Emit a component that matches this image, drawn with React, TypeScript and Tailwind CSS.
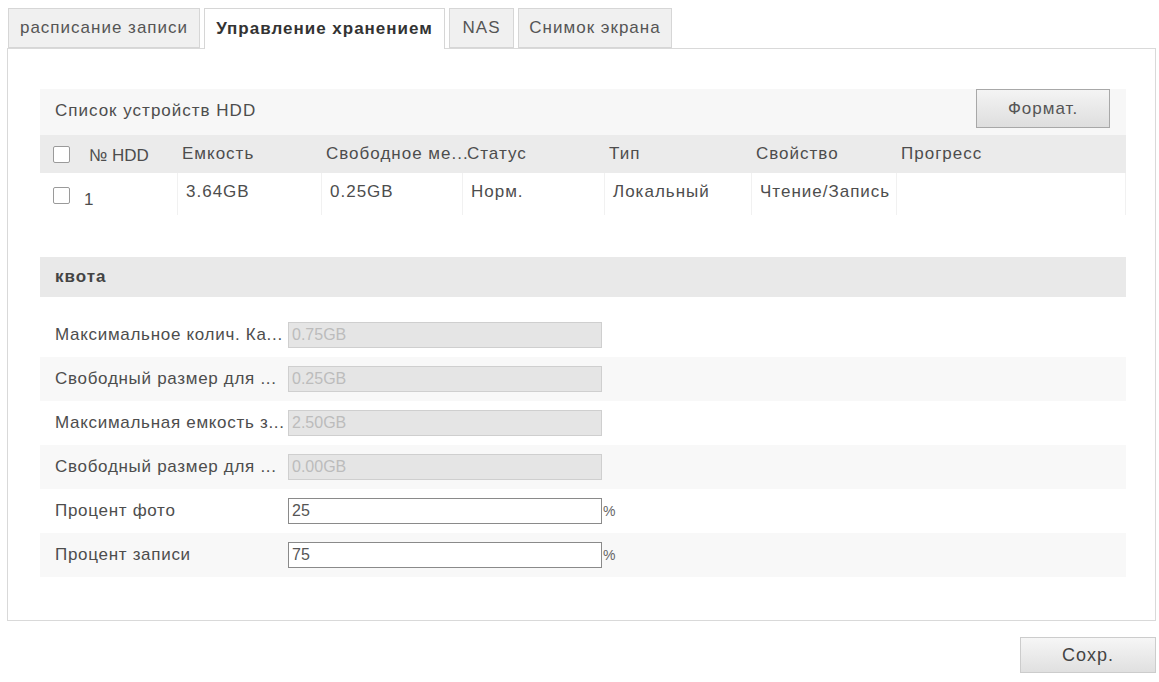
import React from "react";

const tabs = [
  { label: "расписание записи", w: "w-[192px]", active: false },
  { label: "Управление хранением", w: "w-[241px]", active: true },
  { label: "NAS", w: "w-[65px]", active: false },
  { label: "Снимок экрана", w: "w-[154px]", active: false },
];

const columns = [
  { title: "Емкость", value: "3.64GB", w: "w-[144px]" },
  { title: "Свободное ме...", value: "0.25GB", w: "w-[141px]" },
  { title: "Статус", value: "Норм.", w: "w-[142px]" },
  { title: "Тип", value: "Локальный", w: "w-[147px]" },
  { title: "Свойство", value: "Чтение/Запись", w: "w-[145px]" },
  { title: "Прогресс", value: "", w: "flex-1" },
];

const quotaRows = [
  { label: "Максимальное колич. Ка...", value: "0.75GB", disabled: true },
  { label: "Свободный размер для ...", value: "0.25GB", disabled: true },
  { label: "Максимальная емкость з...", value: "2.50GB", disabled: true },
  { label: "Свободный размер для ...", value: "0.00GB", disabled: true },
  { label: "Процент фото", value: "25", disabled: false },
  { label: "Процент записи", value: "75", disabled: false },
];

function Checkbox() {
  return (
    <span className="inline-block h-[17px] w-[17px] shrink-0 rounded-[2px] border border-[#9a9a9a] bg-white" />
  );
}

export default function App() {
  return (
    <div className="h-[682px] w-[1159px] bg-white font-['Liberation_Sans',Arial,sans-serif] text-[17px] tracking-[1px] text-[#4d4d4d]">
      {/* Tabs */}
      <div className="flex h-[48px] items-end gap-[4px] pl-[8px]">
        {tabs.map((t) => (
          <div
            key={t.label}
            className={
              t.active
                ? `relative z-10 -mb-px flex h-[41px] ${t.w} items-center justify-center whitespace-nowrap border border-b-0 border-[#d6d6d6] bg-white pb-[1px] font-bold text-[#333]`
                : `flex h-[40px] ${t.w} items-center justify-center whitespace-nowrap border border-[#d6d6d6] bg-[#f0f0f0] text-[#555]`
            }
          >
            {t.label}
          </div>
        ))}
      </div>

      {/* Panel */}
      <div className="ml-[7px] h-[573px] w-[1149px] border border-[#d9d9d9] pt-[40px] pl-[32px] pr-[29px]">
        {/* HDD list header */}
        <div className="flex h-[46px] items-start justify-between bg-[#f7f7f7]">
          <span className="pl-[15px] pt-[9px]">Список устройств HDD</span>
          <button className="mr-[16px] h-[39px] w-[134px] border border-[#a8a8a8] bg-gradient-to-b from-[#f4f4f4] to-[#dedede] font-normal text-[#555]">
            Формат.
          </button>
        </div>

        {/* Table header */}
        <div className="flex h-[38px] items-center whitespace-nowrap bg-[#ebebeb]">
          <div className="flex w-[138px] items-center pl-[13px]">
            <Checkbox />
            <span className="ml-[19px] pt-[4px] tracking-[0px]">№ HDD</span>
          </div>
          {columns.map((c) => (
            <div key={c.title} className={`${c.w} pl-[4px]`}>
              {c.title}
            </div>
          ))}
        </div>

        {/* Table row */}
        <div className="flex h-[42px] whitespace-nowrap bg-white">
          <div className="flex w-[138px] items-center border-r border-[#f1f1f1] pl-[13px] pt-[2px]">
            <Checkbox />
            <span className="ml-[14px] pt-[10px]">1</span>
          </div>
          {columns.map((c) => (
            <div
              key={c.title}
              className={`${c.w} flex items-center border-r border-[#f1f1f1] pb-[4px] pl-[8px]`}
            >
              {c.value}
            </div>
          ))}
        </div>

        {/* Quota */}
        <div className="mt-[42px] flex h-[40px] items-center bg-[#e9e9e9] pl-[15px] font-bold text-[#444]">
          квота
        </div>

        <div className="mt-[16px]">
          {quotaRows.map((r, i) => (
            <div
              key={i}
              className={`flex h-[44px] items-center ${i % 2 === 1 ? "bg-[#f8f8f8]" : "bg-white"}`}
            >
              <span className="w-[248px] shrink-0 whitespace-nowrap pl-[15px] tracking-[0.7px]">
                {r.label}
              </span>
              <input
                readOnly
                value={r.value}
                className={
                  r.disabled
                    ? "h-[26px] w-[314px] border border-[#cfcfcf] bg-[#e5e5e5] pl-[3px] text-[16px] tracking-[0px] text-[#bcbcbc] outline-none"
                    : "h-[26px] w-[314px] border border-[#8a8a8a] bg-white pl-[3px] text-[16px] tracking-[0px] text-[#555] outline-none"
                }
              />
              {!r.disabled && (
                <span className="ml-[1px] text-[14px] tracking-[0px] text-[#666]">%</span>
              )}
            </div>
          ))}
        </div>
      </div>

      {/* Save */}
      <div className="mt-[16px] flex justify-end pr-[3px]">
        <button className="h-[36px] w-[136px] border border-[#cccccc] bg-gradient-to-b from-[#f6f6f6] to-[#e0e0e0] font-normal text-[18px] text-[#444]">
          Сохр.
        </button>
      </div>
    </div>
  );
}
